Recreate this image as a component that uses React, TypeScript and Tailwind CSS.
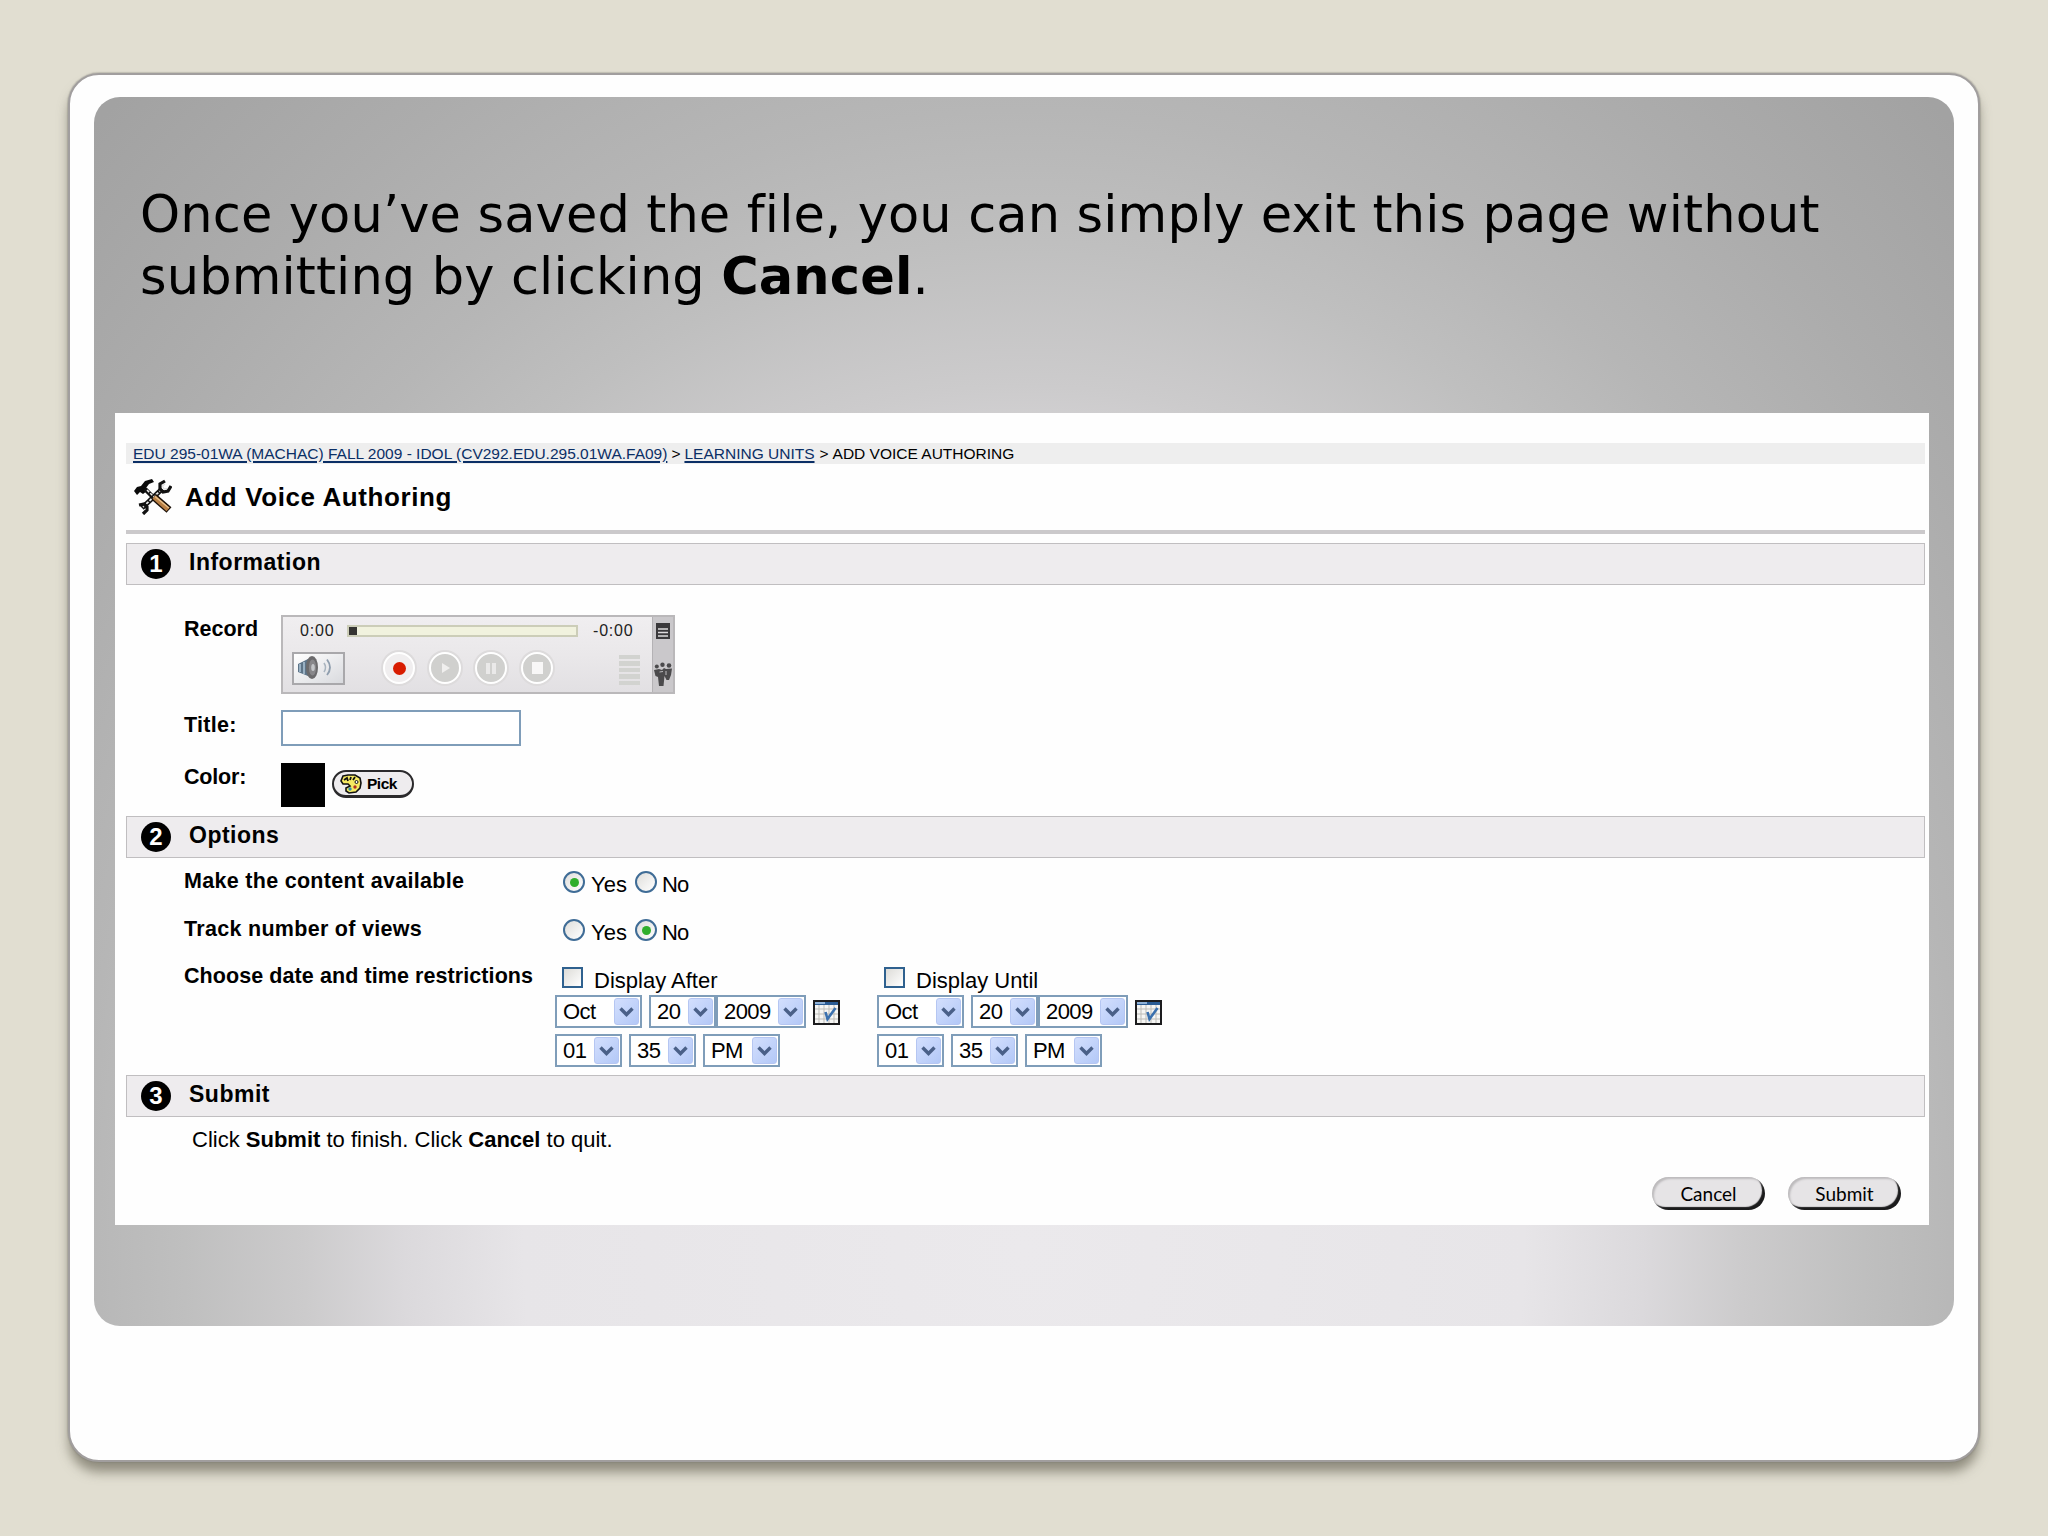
import type { ReactNode } from 'react';

function ToolsIcon() {
  return (
    <svg className="w-[38px] h-[36px]" viewBox="0 0 38 36" fill="none">
      {/* Wrench */}
      <path d="M8 29 L28 10" stroke="#111" strokeWidth="5" />
      <path d="M9 28 L28 10" stroke="#e8e8e8" strokeWidth="1.8" strokeDasharray="3 1.5" />
      <path d="M31 2 L26 5 L26 10 L29 13 L34 12 L37 7" stroke="#111" strokeWidth="3.2" />
      <path d="M31 5 L28.5 7 L30 10 L33 9.5" stroke="#ddd" strokeWidth="1.2" />
      <path d="M5 26 L10 25 L13 28 L13 31 L9 35" stroke="#111" strokeWidth="3.2" />
      {/* Hammer */}
      <path d="M0 12 L3 8 L7 7 L11 2 L18 0 L20 3 L15 5 L12 9 L13 12 L9 15 L6 13 L3 16 Z" fill="#0a0a0a" />
      <path d="M11 10 L22 21" stroke="#111" strokeWidth="4.5" />
      <path d="M13 11 L21 19" stroke="#f2f2f2" strokeWidth="1.5" strokeDasharray="3 1.5" />
      <path d="M20 18 L35 31" stroke="#1a1008" strokeWidth="7.5" />
      <path d="M20 18 L34 30.5" stroke="#b87f45" strokeWidth="4.5" />
      <path d="M21 17.5 L35 29" stroke="#e8c18c" strokeWidth="1.4" />
    </svg>
  );
}

function SpeakerIcon() {
  return (
    <svg className="w-[38px] h-[26px]" viewBox="0 0 38 26" fill="none">
      <path d="M2 9 L12 4 L12 21 L2 17 Z" fill="#5d7488" />
      <path d="M4 9 V17 M8 7 V19" stroke="#a9c0d2" strokeWidth="1.6" />
      <ellipse cx="16" cy="12.5" rx="6" ry="11.5" fill="#6b6a6c" />
      <ellipse cx="16.5" cy="12.5" rx="3.6" ry="8" fill="#88878a" />
      <ellipse cx="17" cy="12.5" rx="1.8" ry="3.5" fill="#c4c6c9" />
      <path d="M28 8 Q31 12.5 28 17" stroke="#a9b4bf" strokeWidth="1.6" />
      <path d="M31 4.5 Q37 12.5 31 20" stroke="#8f9eae" strokeWidth="1.8" />
    </svg>
  );
}

function MenuIcon() {
  return (
    <svg className="w-[14px] h-[16px]" viewBox="0 0 14 16">
      <rect width="14" height="16" fill="#3a393b" />
      <path d="M2 6 H12 M2 9.5 H12 M2 13 H12" stroke="#dddbdd" strokeWidth="1.4" />
    </svg>
  );
}

function PeopleIcon() {
  return (
    <svg className="w-[18px] h-[24px]" viewBox="0 0 18 24" fill="#4b4a4c">
      <circle cx="8.5" cy="2.8" r="2.2" />
      <circle cx="2.8" cy="4.5" r="2" />
      <circle cx="15" cy="3.5" r="2.3" />
      <path d="M0 8 L5 7 L8 8 L10 6 L12 7 L18 6.5 L17 13 L15 18 L12.5 18 L10.5 14 L9.5 24 H5 L4 15 L1.5 14 Z" />
      <path d="M5.5 10 L9 9.5 M12 9 L12 13" stroke="#bdbbbe" strokeWidth="1" />
    </svg>
  );
}

function PaletteIcon() {
  return (
    <svg className="w-[22px] h-[20px]" viewBox="0 0 22 20">
      <path
        d="M3 2 L8 1 L15 1 L20 4 L21 9 L20 14 L16 18 L9 19 L6 17 L6 14 L10 12 L8 10 L3 10 L1 7 Z"
        fill="#f6ea62"
        stroke="#111"
        strokeWidth="1.6"
      />
      <path d="M4 6 L7 4 L8 7 M10 6 L11 3 M13 6 L15 3" stroke="#111" strokeWidth="1.8" fill="none" />
      <circle cx="16.5" cy="8" r="1.5" fill="#fff" stroke="#111" />
      <circle cx="15" cy="13" r="1.7" fill="#b03020" />
      <circle cx="10" cy="15" r="1.7" fill="#2f8fb0" />
    </svg>
  );
}

function CalendarIcon() {
  return (
    <svg className="w-[27px] h-[25px]" viewBox="0 0 27 25" fill="none">
      <rect x="1" y="1" width="25" height="23" fill="#f6f6f4" />
      <path d="M6 5 V23 M11 5 V23 M16 5 V23 M21 5 V23 M2 9 H25 M2 14 H25 M2 19 H25" stroke="#bdbcb8" />
      <rect x="1" y="1" width="25" height="4" fill="#2b5c94" />
      <path d="M2 3 H12" stroke="#8fb2d8" strokeWidth="2" />
      <rect x="1" y="1" width="25" height="23" stroke="#1c1c1e" strokeWidth="2" />
      <path d="M12.5 12 L14.5 19 L22.5 8" stroke="#3a70ae" strokeWidth="2.6" />
    </svg>
  );
}

function PlayerButton({ active, children }: { active?: boolean; children: ReactNode }) {
  return (
    <div className="w-[36px] h-[36px] rounded-full bg-[#dddbdc] flex items-center justify-center">
      <div
        className={`w-[32px] h-[32px] rounded-full border-2 border-white flex items-center justify-center ${
          active ? 'bg-[#f0eeef]' : 'bg-[#d0d0ce]'
        }`}
      >
        {children}
      </div>
    </div>
  );
}

function Player() {
  return (
    <div className="w-[394px] h-[79px] flex border-2 border-[#bab8ba] bg-linear-to-b from-[#f0eef0] via-[#eae8ea] to-[#e2e0e3]">
      <div className="w-[369px]">
        <div className="flex items-center h-[27px] pl-[17px] text-[16px] text-[#222]">
          <span className="w-[47px] pt-px tracking-[0.8px]">0:00</span>
          <div className="w-[231px] h-[12px] border-2 border-[#cccdb8] bg-[#f1f2de]">
            <div className="w-[8px] h-[8px] bg-[#353432]" />
          </div>
          <span className="ml-[15px] pt-px tracking-[0.8px]">-0:00</span>
        </div>
        <div className="flex items-center h-[36px] mt-[6px] pl-[9px]">
          <div className="w-[53px] h-[33px] border-2 border-[#a9a8ab] bg-linear-to-br from-white to-[#d9dade] flex items-center pl-[2px]">
            <SpeakerIcon />
          </div>
          <div className="flex gap-[10px] ml-[36px]">
            <PlayerButton active>
              <div className="w-[13px] h-[13px] rounded-full bg-[#d81c00]" />
            </PlayerButton>
            <PlayerButton>
              <svg className="w-[10px] h-[12px] ml-[2px]" viewBox="0 0 10 12">
                <path d="M1 1 L9 6 L1 11 Z" fill="#f0efee" />
              </svg>
            </PlayerButton>
            <PlayerButton>
              <div className="w-[10px] h-[11px] border-x-4 border-[#eae9e9]" />
            </PlayerButton>
            <PlayerButton>
              <div className="w-[11px] h-[12px] bg-[#f8f7f7]" />
            </PlayerButton>
          </div>
          <div className="ml-[64px] mt-[4px] flex flex-col gap-[2px]">
            {[0, 1, 2, 3, 4].map((i) => (
              <div key={i} className="w-[21px] h-[4.5px] bg-[#d2d3d0]" />
            ))}
          </div>
        </div>
      </div>
      <div className="flex-1 bg-[#cac8cb] border-l border-[#b4b2b5] flex flex-col items-center pt-[6px]">
        <MenuIcon />
        <div className="h-[23px]" />
        <PeopleIcon />
      </div>
    </div>
  );
}

function SectionBar({ num, title }: { num: number; title: string }) {
  return (
    <div className="h-[42px] ml-[11px] mr-[4px] border border-[#c0bec0] bg-[#eeecee] flex items-center">
      <div className="w-[30px] h-[30px] ml-[14px] rounded-full bg-black text-white flex items-center justify-center text-[24px] font-bold leading-none">
        {num}
      </div>
      <h2 className="ml-[18px] -mt-[3px] text-[23px] leading-none font-bold tracking-[0.5px]">{title}</h2>
    </div>
  );
}

function Radio({ checked }: { checked?: boolean }) {
  return (
    <div className="w-[22px] h-[22px] mt-[13px] rounded-full border-2 border-[#3f6c96] bg-linear-to-br from-[#dfdedb] to-white flex items-center justify-center">
      {checked && <div className="w-[9px] h-[9px] rounded-full bg-[#2fae2c]" />}
    </div>
  );
}

function RadioRow({ label, value }: { label: string; value: 'yes' | 'no' }) {
  return (
    <div className="h-[48px] flex items-start leading-none">
      <label className="w-[379px] pt-[13px] text-[21.5px] font-bold tracking-[0.3px]">{label}</label>
      <Radio checked={value === 'yes'} />
      <span className="w-[44px] ml-[6px] pt-[16px] text-[22px]">Yes</span>
      <Radio checked={value === 'no'} />
      <span className="ml-[5px] pt-[16px] text-[22px] tracking-[-1px]">No</span>
    </div>
  );
}

function Select({ value, className }: { value: string; className: string }) {
  return (
    <div className={`h-[33px] border-2 border-[#7f9db9] bg-white flex items-center justify-between pl-[6px] pr-px ${className}`}>
      <span className="text-[22px] leading-none tracking-[-0.6px]">{value}</span>
      <div className="w-[25px] h-[27px] rounded-[3px] border border-[#b5c6f2] bg-linear-to-br from-[#d3dffd] to-[#b3c8f7] flex items-center justify-center">
        <svg className="w-[15px] h-[10px]" viewBox="0 0 15 10" fill="none">
          <path d="M1.5 1.5 L7.5 7.5 L13.5 1.5" stroke="#4a6088" strokeWidth="3.4" />
        </svg>
      </div>
    </div>
  );
}

function DateGroup({ label }: { label: string }) {
  return (
    <div className="w-[322px]">
      <div className="flex items-start h-[41px] pl-[7px]">
        <div className="w-[21px] h-[21px] mt-[13px] border-2 border-[#2f618f] bg-linear-to-br from-[#dddcd8] to-white" />
        <span className="ml-[11px] mt-[16px] text-[22px] leading-none whitespace-nowrap">{label}</span>
      </div>
      <div className="flex items-center">
        <Select value="Oct" className="w-[87px]" />
        <Select value="20" className="ml-[7px] w-[67px]" />
        <Select value="2009" className="w-[90px]" />
        <div className="ml-[7px] mt-[2px]">
          <CalendarIcon />
        </div>
      </div>
      <div className="flex gap-[7px] mt-[6px]">
        <Select value="01" className="w-[67px]" />
        <Select value="35" className="w-[67px]" />
        <Select value="PM" className="w-[77px]" />
      </div>
    </div>
  );
}

function PillButton({ children }: { children: string }) {
  return (
    <button className="w-[113px] h-[33px] rounded-full bg-[#e6e4e6] shadow-[inset_2px_2px_2px_#bdbbbd,inset_-3px_-3px_1px_#1b1b1c] flex items-center justify-center font-['Lato',sans-serif] text-[19px] leading-none">
      {children}
    </button>
  );
}

function Screen() {
  return (
    <div className="w-[1814px] h-[812px] ml-[21px] bg-[#fefefe] pt-[30px] text-black font-['Liberation_Sans',Arial,sans-serif]">
      {/* Breadcrumb */}
      <div className="h-[21px] ml-[11px] mr-[4px] pl-[7px] bg-[#eeeeee] flex items-center text-[15.5px] leading-none whitespace-nowrap">
        <a className="text-[#0b2f66] underline decoration-2 underline-offset-2">
          EDU 295-01WA (MACHAC) FALL 2009 - IDOL (CV292.EDU.295.01WA.FA09)
        </a>
        <span className="mx-[4px]">&gt;</span>
        <a className="text-[#0b2f66] underline decoration-2 underline-offset-2">LEARNING UNITS</a>
        <span className="ml-[5px] mr-[4px]">&gt;</span>
        <span>ADD VOICE AUTHORING</span>
      </div>

      <div className="h-[66px] pl-[19px] flex items-center">
        <ToolsIcon />
        <h1 className="ml-[13px] text-[26px] leading-none font-bold tracking-[0.6px]">Add Voice Authoring</h1>
      </div>
      <div className="h-[4px] ml-[11px] mr-[4px] bg-[#cbc9cb]" />

      <div className="h-[9px]" />
      <SectionBar num={1} title="Information" />
      <div className="h-[231px] pl-[69px] pt-[30px] text-[21.5px] leading-none font-bold">
        <div className="flex items-start">
          <label className="w-[97px] pt-[4px]">Record</label>
          <div className="font-normal">
            <Player />
          </div>
        </div>
        <div className="flex items-start mt-[16px]">
          <label className="w-[97px] pt-[5px] tracking-[0.3px]">Title:</label>
          <div className="w-[240px] h-[36px] border-2 border-[#7f9db9] bg-white" />
        </div>
        <div className="flex items-start mt-[17px]">
          <label className="w-[97px] pt-[4px] tracking-[-0.2px]">Color:</label>
          <div className="w-[44px] h-[44px] bg-black" />
          <button className="w-[82px] h-[28px] ml-[7px] mt-[7px] rounded-full border-2 border-b-[3px] border-[#2b2a2c] bg-[#eeecee] flex items-center pl-[6px] text-[15.5px] leading-none">
            <PaletteIcon />
            <span className="ml-[5px] tracking-[-0.5px]">Pick</span>
          </button>
        </div>
      </div>

      <SectionBar num={2} title="Options" />
      <div className="h-[217px] pl-[69px]">
        <RadioRow label="Make the content available" value="yes" />
        <RadioRow label="Track number of views" value="no" />
        <div className="flex items-start">
          <label className="w-[371px] pt-[12px] text-[21.5px] leading-none font-bold tracking-[0.08px]">
            Choose date and time restrictions
          </label>
          <DateGroup label="Display After" />
          <DateGroup label="Display Until" />
        </div>
      </div>

      <SectionBar num={3} title="Submit" />
      <p className="pl-[77px] pt-[12px] text-[22px] leading-none">
        Click <b>Submit</b> to finish. Click <b>Cancel</b> to quit.
      </p>
      <div className="flex justify-end gap-[23px] mt-[26px] pr-[28px]">
        <PillButton>Cancel</PillButton>
        <PillButton>Submit</PillButton>
      </div>
    </div>
  );
}

export default function App() {
  return (
    <div className="w-[2048px] h-[1536px] overflow-hidden bg-[#e1ded1] pt-[73px] pl-[68px]">
      <div className="w-[1912px] h-[1389px] rounded-[31px] border-2 border-[#a19e9e] bg-[#fefefe] shadow-[0_0_1px_1px_rgba(120,118,112,0.3),0_11px_12px_-1px_rgba(90,87,72,0.6)] pt-[22px] pl-[24px]">
        <div className="w-[1860px] h-[1229px] rounded-[26px] bg-[radial-gradient(1000px_1200px_at_50%_1153px,#ebe9ec_0%,#e7e5e8_50%,#dbd9dc_62%,#cccbcc_72%,#bfbfbf_84%,#b6b6b6_95%,#acacac_112%,#a2a2a2_132%)]">
          <div className="h-[316px] pl-[46px] pt-[87px]">
            <p className="text-[51px] leading-[61.5px] tracking-[0.14px] whitespace-nowrap text-black font-['DejaVu_Sans',Verdana,sans-serif]">
              Once you’ve saved the file, you can simply exit this page without
              <br />
              submitting by clicking <b>Cancel</b>.
            </p>
          </div>
          <Screen />
        </div>
      </div>
    </div>
  );
}
